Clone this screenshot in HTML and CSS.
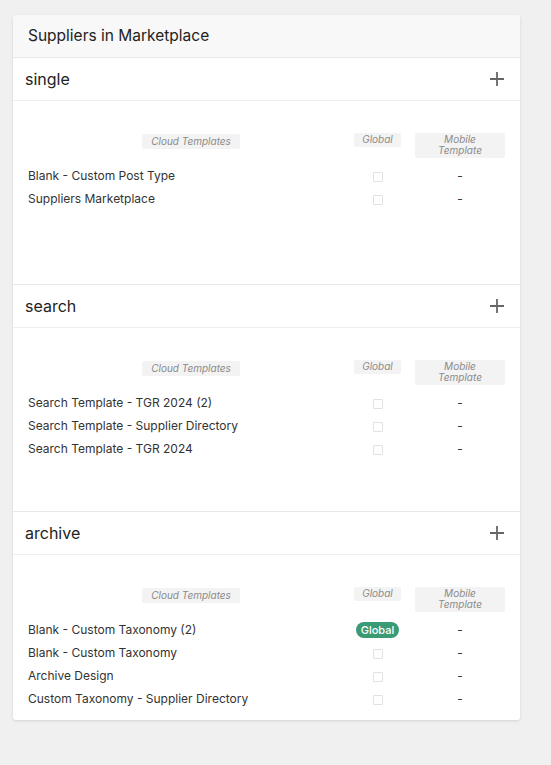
FILE: index.html
```html
<!DOCTYPE html>
<html>
<head>
    <title>Suppliers in Marketplace</title>
    <link rel="stylesheet" href="styles.css">
</head>
<body>
    <div class="card">
        <div class="card-header">Suppliers in Marketplace</div>

        <div class="section">
            <div class="section-header">
                <span class="section-title">single</span>
                <svg class="add" width="14" height="14" viewBox="0 0 14 14"><path d="M7 0v14M0 7h14" /></svg>
            </div>
            <div class="section-body">
                <div class="tpl-grid">
                    <div class="th"><span class="pill">Cloud Templates</span></div>
                    <div class="th"><span class="pill pill-full">Global</span></div>
                    <div class="th th-mobile"><span class="pill pill-full">Mobile<br>Template</span></div>

                    <div class="td name">Blank - Custom Post Type</div>
                    <div class="td"><span class="check"></span></div>
                    <div class="td td-mobile">-</div>

                    <div class="td name">Suppliers Marketplace</div>
                    <div class="td"><span class="check"></span></div>
                    <div class="td td-mobile">-</div>
                </div>
            </div>
        </div>

        <div class="section">
            <div class="section-header">
                <span class="section-title">search</span>
                <svg class="add" width="14" height="14" viewBox="0 0 14 14"><path d="M7 0v14M0 7h14" /></svg>
            </div>
            <div class="section-body">
                <div class="tpl-grid">
                    <div class="th"><span class="pill">Cloud Templates</span></div>
                    <div class="th"><span class="pill pill-full">Global</span></div>
                    <div class="th th-mobile"><span class="pill pill-full">Mobile<br>Template</span></div>

                    <div class="td name">Search Template - TGR 2024 (2)</div>
                    <div class="td"><span class="check"></span></div>
                    <div class="td td-mobile">-</div>

                    <div class="td name">Search Template - Supplier Directory</div>
                    <div class="td"><span class="check"></span></div>
                    <div class="td td-mobile">-</div>

                    <div class="td name">Search Template - TGR 2024</div>
                    <div class="td"><span class="check"></span></div>
                    <div class="td td-mobile">-</div>
                </div>
            </div>
        </div>

        <div class="section section-last">
            <div class="section-header">
                <span class="section-title">archive</span>
                <svg class="add" width="14" height="14" viewBox="0 0 14 14"><path d="M7 0v14M0 7h14" /></svg>
            </div>
            <div class="section-body">
                <div class="tpl-grid">
                    <div class="th"><span class="pill">Cloud Templates</span></div>
                    <div class="th"><span class="pill pill-full">Global</span></div>
                    <div class="th th-mobile"><span class="pill pill-full">Mobile<br>Template</span></div>

                    <div class="td name">Blank - Custom Taxonomy (2)</div>
                    <div class="td"><span class="badge">Global</span></div>
                    <div class="td td-mobile">-</div>

                    <div class="td name">Blank - Custom Taxonomy</div>
                    <div class="td"><span class="check"></span></div>
                    <div class="td td-mobile">-</div>

                    <div class="td name">Archive Design</div>
                    <div class="td"><span class="check"></span></div>
                    <div class="td td-mobile">-</div>

                    <div class="td name">Custom Taxonomy - Supplier Directory</div>
                    <div class="td"><span class="check"></span></div>
                    <div class="td td-mobile">-</div>
                </div>
            </div>
        </div>
    </div>
</body>
</html>
```

FILE: styles.css
```css
body {
    margin: 0;
    padding: 15px 0 40px 13px;
    background-color: #f0f0f0;
    font-family: Inter, "Liberation Sans", Arial, sans-serif;
    color: #222;
}
.card {
    width: 507px;
    background-color: #fff;
    border-radius: 3px;
    box-shadow: 0 1px 3px rgba(0, 0, 0, 0.12);
    overflow: hidden;
}
.card-header {
    height: 42px;
    line-height: 42px;
    padding-left: 15px;
    font-size: 15.5px;
    background-color: #f8f8f8;
    border-bottom: 1px solid #e8e8e8;
}
.section {
    border-bottom: 1px solid #e8e8e8;
}
.section-last {
    border-bottom: none;
}
.section-header {
    height: 42px;
    padding: 0 16px 0 12px;
    display: flex;
    align-items: center;
    justify-content: space-between;
    border-bottom: 1px solid #eee;
}
.section-title {
    font-size: 16px;
    color: #222;
}
.add path {
    stroke: #666;
    stroke-width: 1.8;
    fill: none;
}
.section-body {
    min-height: 183px;
    box-sizing: border-box;
    padding: 32px 15px 10px 15px;
}
.section-last .section-body {
    min-height: 0;
}
.tpl-grid {
    display: grid;
    grid-template-columns: 1fr 47px 104px;
    grid-template-rows: 31px;
    grid-auto-rows: 23px;
    align-items: center;
}
.th {
    align-self: start;
    display: flex;
    justify-content: center;
    align-items: flex-start;
}
.th-mobile,
.td-mobile {
    padding-left: 14px;
}
.pill {
    display: block;
    padding: 2px 9px;
    font-size: 10px;
    line-height: 11px;
    font-style: italic;
    color: #8a8a8a;
    background-color: #f3f3f3;
    border-radius: 2px;
    text-align: center;
}
.pill-full {
    flex: 1;
    padding: 1px 0 2px;
}
.th:first-child .pill {
    margin-top: 1px;
}
.td {
    text-align: center;
    font-size: 12px;
    color: #333;
}
.td.name {
    text-align: left;
}
.check {
    display: inline-block;
    width: 8px;
    height: 8px;
    margin-top: 5px;
    border: 1px solid #e2e2e2;
    border-radius: 1px;
}
.badge {
    display: inline-block;
    padding: 0 5px;
    height: 16px;
    line-height: 16px;
    font-size: 11px;
    font-weight: 500;
    color: #fff;
    background-color: #3a9a74;
    border-radius: 8px;
}
```
